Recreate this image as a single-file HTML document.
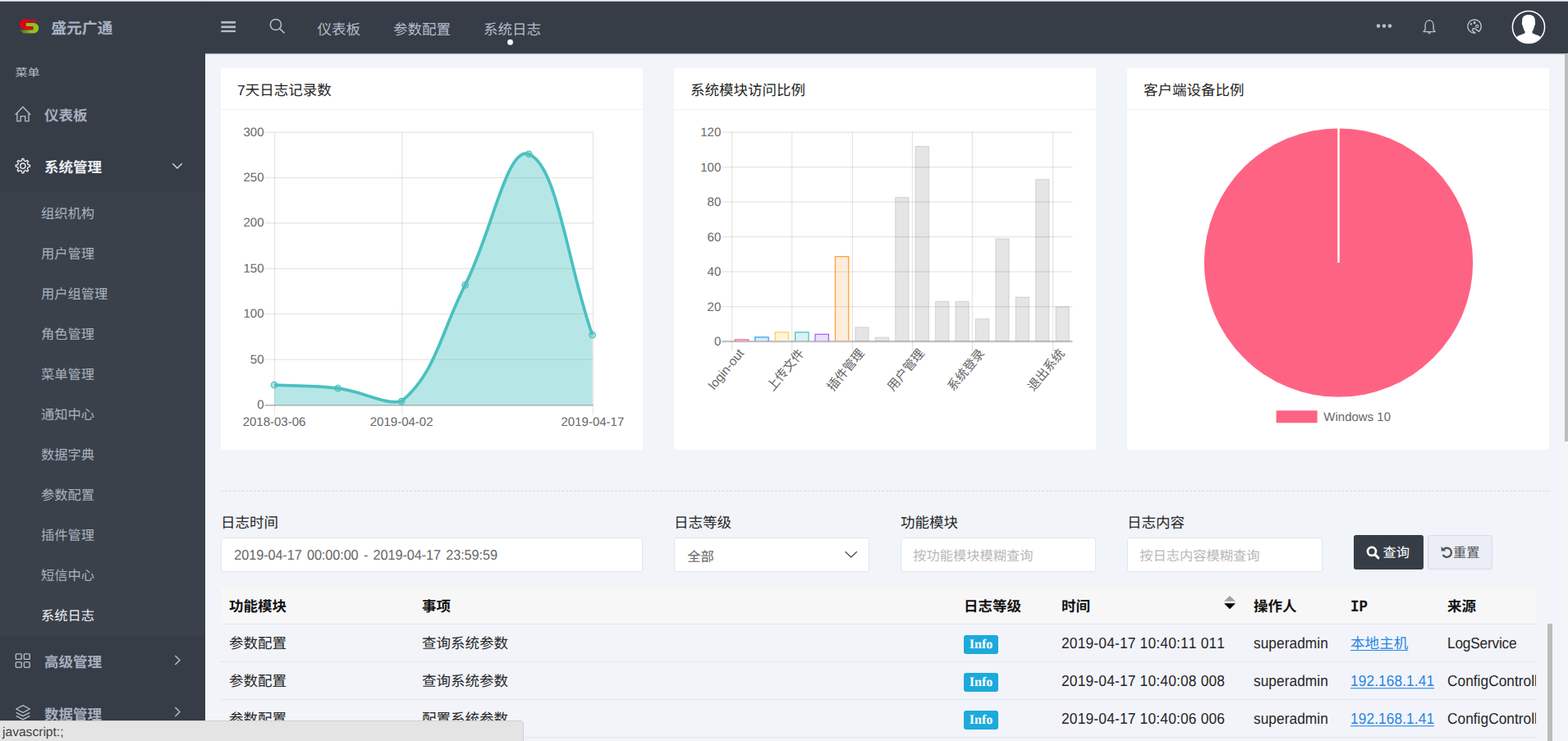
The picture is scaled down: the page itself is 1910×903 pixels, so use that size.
<!DOCTYPE html>
<html lang="zh-CN"><head><meta charset="utf-8"><title>系统日志</title>
<style>
*{box-sizing:border-box;margin:0;padding:0}
html,body{width:1910px;height:903px;overflow:hidden}
body{position:relative;text-rendering:geometricPrecision;background:#f1f4f9;font-family:"Liberation Sans","Noto Sans CJK SC",sans-serif;color:#222;font-size:17.5px;line-height:1}
.abs{position:absolute}
svg{position:absolute;overflow:visible}
#topline{left:0;top:0;width:1910px;height:2px;background:linear-gradient(#ececec 0,#ececec 55%,#7b7f86 100%);z-index:50}
#side{left:0;top:0;width:250px;height:903px;background:#363d47}
#head{left:250px;top:0;width:1660px;height:65px;background:#363d47;box-shadow:0 1px 1px rgba(40,46,56,.35)}
#sub{left:0;top:235px;width:250px;height:539px;background:#3a414b}
.t{position:absolute;white-space:nowrap;line-height:20px;height:20px;margin-top:-10px}
.logo{left:62.3px;top:34.7px;font-size:18.75px;font-weight:bold;color:#a8b2c3}
.menu{left:18.5px;top:88.6px;font-size:15px;color:#b5bbc6;transform:scaleY(.88);transform-origin:0 50%}
.m1{left:54px;font-size:17.5px;font-weight:bold;color:#a6afbd}
.m1.on{color:#eceef2}
.m2{left:50px;margin-top:-9.3px;font-size:16.25px;color:#aab2bf}
.m2.on{color:#eef0f3}
.tab{top:35.5px;font-size:17.5px;color:#b3bccb}
.card{position:absolute;top:83px;width:514px;height:465px;background:#fff;border-radius:3px}
.card .hd{position:absolute;left:0;top:0;width:514px;height:50.6px;border-bottom:1.25px solid #edf0f6}
.card .tt{left:20px;top:27px;font-size:17.5px;color:#262626}
.lab{font-size:17.5px;color:#262626;top:636.6px}
.inp{position:absolute;top:655px;height:42px;background:#fff;border:1px solid #e1e4f2;border-radius:3px}
.inp .t{left:15px;top:20px;font-size:16.25px;color:#666;font-kerning:none}
.inp .ph{color:#b9b9b9}
.btn{position:absolute;top:652px;height:42px;border-radius:3px}
#tbl{left:269px;top:716px;width:1602px;height:187px;overflow:hidden}
#th{left:0;top:0;width:1602px;height:44.5px;background:#f7f7f8;border-bottom:1.25px solid #e1e6f2}
.tr{position:absolute;left:0;width:1602px;height:46px;border-bottom:1.25px solid #e1e6f2;background:#f2f4fa}
.th{font-weight:bold;font-size:17.5px;color:#111;top:23px}
.td{font-size:17.3px;color:#262626;top:22.4px;font-kerning:none;transform:scaleY(1.085);transform-origin:0 20%}
.td.c{font-size:17.5px;top:23px;transform:none}
.badge{position:absolute;left:905px;top:13.2px;width:42px;height:23.3px;border-radius:3px;background:#1caadb;color:#fff;font-family:"Liberation Serif",serif;font-weight:bold;font-size:16px;line-height:23.6px;text-align:center}
a.ip{color:#2b85e4;text-decoration:underline;text-decoration-thickness:1.25px;text-underline-offset:2px}
#status{left:0;top:877.5px;width:637.5px;height:26px;background:#e4e4e4;border-top:1px solid #d0d0d0;border-right:1px solid #d0d0d0;border-top-right-radius:5px;z-index:40}
#status .t{left:3px;top:14px;font-size:15.6px;color:#3f3f3f}
</style></head><body>
<div id="side" class="abs"></div>
<div id="sub" class="abs"></div>
<div id="head" class="abs"></div>
<div id="topline" class="abs"></div>
<svg style="left:16px;top:16px" width="40" height="32" viewBox="16 16 40 32">
<defs>
<linearGradient id="lgR" x1="33" x2="46.6" y1="0" y2="0" gradientUnits="userSpaceOnUse"><stop offset="0" stop-color="#e60012"/><stop offset=".3" stop-color="#b4141f"/><stop offset="1" stop-color="#7c2231"/></linearGradient>
<linearGradient id="lgG" x1="24.2" x2="37.1" y1="0" y2="0" gradientUnits="userSpaceOnUse"><stop offset="0" stop-color="#4c6638"/><stop offset=".55" stop-color="#6a952d"/><stop offset="1" stop-color="#8fc31f"/></linearGradient>
</defs>
<path d="M31.6,28 H41 a6.25,6.25 0 0 1 0,12.5 H37 V36.5 H39.5 a1,2.1 0 0 0 0,-4.2 H31.6 Z" fill="#8fc31f"/>
<path d="M37.1,36.5 H24.2 L28.4,40.5 H37.1 Z" fill="url(#lgG)"/>
<path d="M33,23.6 H29.8 a6,6.2 0 0 0 0,12.4 H39.5 a1,1.85 0 0 0 0,-3.7 H31.5 a1,2.15 0 0 1 0,-4.3 H33 Z" fill="#e60012"/>
<path d="M32.9,23.6 H42.5 L46.6,27.2 L46.3,27.9 H32.9 Z" fill="url(#lgR)"/>
</svg>
<div class="t logo">盛元广通</div>
<div class="t menu">菜单</div>
<svg style="left:0;top:0" width="250" height="903" viewBox="0 0 250 903" fill="none" stroke="#b6bfcc" stroke-width="1.35" stroke-linejoin="miter">
<path d="M18.7,139.7 L27.9,130.3 L37.1,139.7 M20.9,137.6 V147.6 H25.2 V141.6 H30.7 V147.6 H35 V137.6"/>
<g stroke="#eceef2"><path d="M26.43,195.81 L26.90,193.50 L28.80,193.50 L29.27,195.81 L31.33,196.66 L33.29,195.36 L34.64,196.71 L33.34,198.67 L34.19,200.73 L36.50,201.20 L36.50,203.10 L34.19,203.57 L33.34,205.63 L34.64,207.59 L33.29,208.94 L31.33,207.64 L29.27,208.49 L28.80,210.80 L26.90,210.80 L26.43,208.49 L24.37,207.64 L22.41,208.94 L21.06,207.59 L22.36,205.63 L21.51,203.57 L19.20,203.10 L19.20,201.20 L21.51,200.73 L22.36,198.67 L21.06,196.71 L22.41,195.36 L24.37,196.66Z" stroke-linejoin="round"/><circle cx="27.85" cy="202.15" r="3.15"/></g>
<path d="M210.3,199.3 L216,205 L221.7,199.3" stroke="#d6dae2" stroke-width="1.4"/>
<rect x="19.3" y="796.9" width="6.9" height="6.5" rx="1"/>
<rect x="29.3" y="796.9" width="6.9" height="6.5" rx="1"/>
<rect x="19.3" y="806.8" width="6.9" height="6.5" rx="1"/>
<rect x="29.3" y="806.8" width="6.9" height="6.5" rx="1"/>
<path d="M213.4,799 L218.9,804.5 L213.4,810" stroke-width="1.4"/>
<path d="M213.4,862 L218.9,867.5 L213.4,873" stroke-width="1.4"/>
<path d="M28,859.6 L36.3,864 L28,868.4 L19.7,864 Z M19.7,868.3 L28,872.7 L36.3,868.3 M19.7,872.4 L28,876.8 L36.3,872.4" stroke-linejoin="round"/>
</svg>
<div class="t m1" style="top:141px">仪表板</div>
<div class="t m1 on" style="top:204px">系统管理</div>
<div class="t m2" style="top:260px">组织机构</div>
<div class="t m2" style="top:309px">用户管理</div>
<div class="t m2" style="top:358px">用户组管理</div>
<div class="t m2" style="top:407px">角色管理</div>
<div class="t m2" style="top:456px">菜单管理</div>
<div class="t m2" style="top:505px">通知中心</div>
<div class="t m2" style="top:554px">数据字典</div>
<div class="t m2" style="top:603px">参数配置</div>
<div class="t m2" style="top:652px">插件管理</div>
<div class="t m2" style="top:701px">短信中心</div>
<div class="t m2 on" style="top:750px">系统日志</div>
<div class="t m1" style="top:807px">高级管理</div>
<div class="t m1" style="top:870.5px">数据管理</div>
<svg style="left:250px;top:0" width="1660" height="65" viewBox="250 0 1660 65" fill="none" stroke="#b6bfcc" stroke-width="1.4">
<g stroke="none" fill="#b6bfcc"><rect x="269.4" y="25.9" width="17.6" height="2.7"/><rect x="269.4" y="31.5" width="17.6" height="2.7"/><rect x="269.4" y="36.9" width="17.6" height="2.3"/></g>
<circle cx="335.9" cy="30" r="6.6" stroke-width="1.5"/><path d="M340.7,34.8 L346.6,40.5" stroke-width="1.6"/>
<g stroke="none" fill="#b6bfcc"><circle cx="1679" cy="31.6" r="2.3"/><circle cx="1686" cy="31.6" r="2.3"/><circle cx="1693" cy="31.6" r="2.3"/></g>
<path d="M1734,38.6 H1748.2 L1746.1,36 V31 C1746.1,22.8 1736.1,22.8 1736.1,31 V36 Z" stroke-linejoin="round"/><path d="M1739.4,39.2 L1741.1,40.9 L1742.8,39.2" stroke-width="1.2"/><path d="M1741.1,24 V25" stroke-width="1.6"/>
<path d="M1797.0,40.25 A8.15,8.15 0 1 1 1801.3,38.4 L1796.7,34.9 C1795.2,33.7 1792.5,35.8 1793.8,37.3 L1797.0,40.25" stroke-width="1.45" stroke-linecap="round" stroke-linejoin="round"/>
<circle cx="1799.2" cy="31.9" r="1.6" stroke-width="1.2"/><g stroke="none" fill="#b6bfcc"><circle cx="1791.9" cy="29.3" r="1.2"/><circle cx="1796.1" cy="27.7" r="1.6"/></g>
<clipPath id="avc"><circle cx="1862" cy="33" r="19.2"/></clipPath>
<circle cx="1862" cy="33" r="19.6" stroke="#fff" stroke-width="1.5" fill="#363d47"/>
<g clip-path="url(#avc)" stroke="none" fill="#fff"><path d="M1862,17.9 C1856.5,17.9 1853.6,21 1854.2,26 C1853.6,27.5 1853.9,30.5 1854.9,31.5 C1855.4,34.5 1856.6,37 1857.6,38.5 L1857.4,40.4 C1855,41.6 1851.5,42.6 1848.5,44 L1843,56 H1881 L1875.5,44 C1872.5,42.6 1869,41.6 1866.6,40.4 L1866.4,38.5 C1867.4,37 1868.6,34.5 1869.1,31.5 C1870.1,30.5 1870.4,27.5 1869.8,26 C1870.4,21 1867.5,17.9 1862,17.9 Z"/></g>
<circle cx="621.5" cy="51.4" r="3.4" stroke="none" fill="#fff"/>
</svg>
<div class="t tab" style="left:386.5px">仪表板</div>
<div class="t tab" style="left:479px">参数配置</div>
<div class="t tab" style="left:589px">系统日志</div>
<div class="card" style="left:269px"><div class="hd"></div><div class="t tt">7天日志记录数</div></div>
<div class="card" style="left:821px"><div class="hd"></div><div class="t tt">系统模块访问比例</div></div>
<div class="card" style="left:1373px"><div class="hd"></div><div class="t tt">客户端设备比例</div></div>
<svg style="left:269px;top:134px" width="514" height="413" viewBox="269 134 514 413" font-family="Liberation Sans, sans-serif" font-size="15" fill="#666">
<line x1="322.60" x2="722.50" y1="493.90" y2="493.90" stroke="rgba(0,0,0,0.27)" stroke-width="1.9"/>
<text x="321.5" y="497.90" text-anchor="end">0</text>
<line x1="322.60" x2="722.50" y1="438.12" y2="438.12" stroke="rgba(0,0,0,0.1)" stroke-width="1.25"/>
<text x="321.5" y="442.52" text-anchor="end">50</text>
<line x1="322.60" x2="722.50" y1="382.73" y2="382.73" stroke="rgba(0,0,0,0.1)" stroke-width="1.25"/>
<text x="321.5" y="387.13" text-anchor="end">100</text>
<line x1="322.60" x2="722.50" y1="327.35" y2="327.35" stroke="rgba(0,0,0,0.1)" stroke-width="1.25"/>
<text x="321.5" y="331.75" text-anchor="end">150</text>
<line x1="322.60" x2="722.50" y1="271.97" y2="271.97" stroke="rgba(0,0,0,0.1)" stroke-width="1.25"/>
<text x="321.5" y="276.37" text-anchor="end">200</text>
<line x1="322.60" x2="722.50" y1="216.58" y2="216.58" stroke="rgba(0,0,0,0.1)" stroke-width="1.25"/>
<text x="321.5" y="220.98" text-anchor="end">250</text>
<line x1="322.60" x2="722.50" y1="161.20" y2="161.20" stroke="rgba(0,0,0,0.1)" stroke-width="1.25"/>
<text x="321.5" y="165.60" text-anchor="end">300</text>
<line x1="334.60" x2="334.60" y1="161.20" y2="505.50" stroke="rgba(0,0,0,0.1)" stroke-width="1.25"/>
<text x="334.00" y="519.0" text-anchor="middle">2018-03-06</text>
<line x1="489.76" x2="489.76" y1="161.20" y2="505.50" stroke="rgba(0,0,0,0.1)" stroke-width="1.25"/>
<text x="489.16" y="519.0" text-anchor="middle">2019-04-02</text>
<line x1="722.50" x2="722.50" y1="161.20" y2="505.50" stroke="rgba(0,0,0,0.1)" stroke-width="1.25"/>
<text x="721.90" y="519.0" text-anchor="middle">2019-04-17</text>
<path d="M334.10,469.13 C365.10,470.77 380.90,469.28 411.60,473.23 C442.90,477.26 468.72,493.50 489.10,489.07 C530.72,455.25 537.04,404.74 566.60,347.29 C599.04,284.23 617.35,177.27 644.10,187.78 C679.35,201.64 690.60,320.04 721.60,408.21 L721.60,493.50 L334.10,493.50 Z" fill="rgba(75,192,192,0.4)" stroke="none"/>
<path d="M334.10,469.13 C365.10,470.77 380.90,469.28 411.60,473.23 C442.90,477.26 468.72,493.50 489.10,489.07 C530.72,455.25 537.04,404.74 566.60,347.29 C599.04,284.23 617.35,177.27 644.10,187.78 C679.35,201.64 690.60,320.04 721.60,408.21" fill="none" stroke="rgb(75,192,192)" stroke-width="3.75" stroke-linecap="butt" stroke-linejoin="miter"/>
<circle cx="334.10" cy="469.13" r="3.75" fill="rgba(75,192,192,0.4)" stroke="rgb(75,192,192)" stroke-width="1.25"/>
<circle cx="411.60" cy="473.23" r="3.75" fill="rgba(75,192,192,0.4)" stroke="rgb(75,192,192)" stroke-width="1.25"/>
<circle cx="489.10" cy="489.07" r="3.75" fill="rgba(75,192,192,0.4)" stroke="rgb(75,192,192)" stroke-width="1.25"/>
<circle cx="566.60" cy="347.29" r="3.75" fill="rgba(75,192,192,0.4)" stroke="rgb(75,192,192)" stroke-width="1.25"/>
<circle cx="644.10" cy="187.78" r="3.75" fill="rgba(75,192,192,0.4)" stroke="rgb(75,192,192)" stroke-width="1.25"/>
<circle cx="721.60" cy="408.21" r="3.75" fill="rgba(75,192,192,0.4)" stroke="rgb(75,192,192)" stroke-width="1.25"/>
</svg>
<svg style="left:821px;top:134px" width="514" height="413" viewBox="821 134 514 413" font-family="Liberation Sans, Noto Sans CJK SC, sans-serif" font-size="15" fill="#666">
<line x1="879.30" x2="1306.40" y1="416.10" y2="416.10" stroke="rgba(0,0,0,0.24)" stroke-width="2.2"/>
<text x="878.3" y="421.10" text-anchor="end">0</text>
<line x1="879.30" x2="1306.40" y1="373.70" y2="373.70" stroke="rgba(0,0,0,0.1)" stroke-width="1.25"/>
<text x="878.3" y="378.60" text-anchor="end">20</text>
<line x1="879.30" x2="1306.40" y1="331.20" y2="331.20" stroke="rgba(0,0,0,0.1)" stroke-width="1.25"/>
<text x="878.3" y="336.10" text-anchor="end">40</text>
<line x1="879.30" x2="1306.40" y1="288.70" y2="288.70" stroke="rgba(0,0,0,0.1)" stroke-width="1.25"/>
<text x="878.3" y="293.60" text-anchor="end">60</text>
<line x1="879.30" x2="1306.40" y1="246.20" y2="246.20" stroke="rgba(0,0,0,0.1)" stroke-width="1.25"/>
<text x="878.3" y="251.10" text-anchor="end">80</text>
<line x1="879.30" x2="1306.40" y1="203.70" y2="203.70" stroke="rgba(0,0,0,0.1)" stroke-width="1.25"/>
<text x="878.3" y="208.60" text-anchor="end">100</text>
<line x1="879.30" x2="1306.40" y1="161.20" y2="161.20" stroke="rgba(0,0,0,0.1)" stroke-width="1.25"/>
<text x="878.3" y="166.10" text-anchor="end">120</text>
<line x1="891.50" x2="891.50" y1="160.70" y2="427.70" stroke="rgba(0,0,0,0.1)" stroke-width="1.25"/>
<line x1="964.70" x2="964.70" y1="160.70" y2="427.70" stroke="rgba(0,0,0,0.1)" stroke-width="1.25"/>
<line x1="1038.40" x2="1038.40" y1="160.70" y2="427.70" stroke="rgba(0,0,0,0.1)" stroke-width="1.25"/>
<line x1="1111.50" x2="1111.50" y1="160.70" y2="427.70" stroke="rgba(0,0,0,0.1)" stroke-width="1.25"/>
<line x1="1184.40" x2="1184.40" y1="160.70" y2="427.70" stroke="rgba(0,0,0,0.1)" stroke-width="1.25"/>
<line x1="1282.60" x2="1282.60" y1="160.70" y2="427.70" stroke="rgba(0,0,0,0.1)" stroke-width="1.25"/>
<path d="M895.32,415.70 V413.79 H911.70 V415.70" fill="rgba(255,99,132,0.2)" stroke="rgb(255,99,132)" stroke-width="1.25"/>
<path d="M919.74,415.70 V410.90 H936.12 V415.70" fill="rgba(54,162,235,0.2)" stroke="rgb(54,162,235)" stroke-width="1.25"/>
<path d="M944.15,415.70 V404.80 H960.53 V415.70" fill="rgba(255,206,86,0.2)" stroke="rgb(255,206,86)" stroke-width="1.25"/>
<path d="M968.57,415.70 V404.80 H984.95 V415.70" fill="rgba(75,192,192,0.2)" stroke="rgb(75,192,192)" stroke-width="1.25"/>
<path d="M992.99,415.70 V407.33 H1009.37 V415.70" fill="rgba(153,102,255,0.2)" stroke="rgb(153,102,255)" stroke-width="1.25"/>
<path d="M1017.41,415.70 V312.60 H1033.79 V415.70" fill="rgba(255,159,64,0.2)" stroke="rgb(255,159,64)" stroke-width="1.25"/>
<path d="M1041.82,415.70 V398.79 H1058.21 V415.70" fill="rgba(0,0,0,0.1)" stroke="rgba(0,0,0,0.1)" stroke-width="1.25"/>
<path d="M1066.24,415.70 V411.24 H1082.62 V415.70" fill="rgba(0,0,0,0.1)" stroke="rgba(0,0,0,0.1)" stroke-width="1.25"/>
<path d="M1090.66,415.70 V240.56 H1107.04 V415.70" fill="rgba(0,0,0,0.1)" stroke="rgba(0,0,0,0.1)" stroke-width="1.25"/>
<path d="M1115.08,415.70 V178.30 H1131.46 V415.70" fill="rgba(0,0,0,0.1)" stroke="rgba(0,0,0,0.1)" stroke-width="1.25"/>
<path d="M1139.49,415.70 V367.43 H1155.88 V415.70" fill="rgba(0,0,0,0.1)" stroke="rgba(0,0,0,0.1)" stroke-width="1.25"/>
<path d="M1163.91,415.70 V367.43 H1180.29 V415.70" fill="rgba(0,0,0,0.1)" stroke="rgba(0,0,0,0.1)" stroke-width="1.25"/>
<path d="M1188.33,415.70 V388.68 H1204.71 V415.70" fill="rgba(0,0,0,0.1)" stroke="rgba(0,0,0,0.1)" stroke-width="1.25"/>
<path d="M1212.75,415.70 V290.93 H1229.13 V415.70" fill="rgba(0,0,0,0.1)" stroke="rgba(0,0,0,0.1)" stroke-width="1.25"/>
<path d="M1237.17,415.70 V362.11 H1253.55 V415.70" fill="rgba(0,0,0,0.1)" stroke="rgba(0,0,0,0.1)" stroke-width="1.25"/>
<path d="M1261.58,415.70 V218.67 H1277.96 V415.70" fill="rgba(0,0,0,0.1)" stroke="rgba(0,0,0,0.1)" stroke-width="1.25"/>
<path d="M1286.00,415.70 V373.80 H1302.38 V415.70" fill="rgba(0,0,0,0.1)" stroke="rgba(0,0,0,0.1)" stroke-width="1.25"/>
<text transform="translate(903.11,427.50) rotate(-50.5)" text-anchor="end" x="0" y="5" font-size="15.2">login-out</text>
<text transform="translate(976.36,427.50) rotate(-50.5)" text-anchor="end" x="0" y="5" font-size="15.2" fill="#666">上传文件</text>
<text transform="translate(1049.61,427.50) rotate(-50.5)" text-anchor="end" x="0" y="5" font-size="15.2" fill="#666">插件管理</text>
<text transform="translate(1122.87,427.50) rotate(-50.5)" text-anchor="end" x="0" y="5" font-size="15.2" fill="#666">用户管理</text>
<text transform="translate(1196.12,427.50) rotate(-50.5)" text-anchor="end" x="0" y="5" font-size="15.2" fill="#666">系统登录</text>
<text transform="translate(1293.79,427.50) rotate(-50.5)" text-anchor="end" x="0" y="5" font-size="15.2" fill="#666">退出系统</text>
</svg>
<svg style="left:1373px;top:134px" width="514" height="413" viewBox="1373 134 514 413" font-family="Liberation Sans, sans-serif" font-size="15" fill="#666">
<circle cx="1630.5" cy="320.1" r="163.7" fill="#ff6384"/>
<line x1="1630.5" x2="1630.5" y1="155.40000000000003" y2="320.1" stroke="#fff" stroke-width="2.5"/>
<rect x="1554.6" y="500.3" width="50" height="15" fill="#ff6384"/>
<text x="1612.3" y="513">Windows 10</text>
</svg>
<svg style="left:269px;top:597px" width="1618" height="3" viewBox="0 0 1618 3"><line x1="0.3" x2="1618" y1="1.4" y2="1.4" stroke="#dadde3" stroke-width="1.25" stroke-dasharray="2.7 2.3"/></svg>
<div class="t lab" style="left:269px">日志时间</div>
<div class="t lab" style="left:821px">日志等级</div>
<div class="t lab" style="left:1097px">功能模块</div>
<div class="t lab" style="left:1373px">日志内容</div>
<div class="inp" style="left:269.3px;width:513.5px"><div class="t" style="letter-spacing:-.08px;word-spacing:1.9px;top:21.2px;transform:scaleY(1.05);transform-origin:0 80%">2019-04-17 00:00:00 - 2019-04-17 23:59:59</div></div>
<div class="inp" style="left:821.3px;width:237.5px"><div class="t" style="top:22.8px">全部</div><svg style="left:205px;top:12px" width="20" height="16" viewBox="0 0 20 16" fill="none" stroke="#555" stroke-width="1.45"><path d="M2.6,4.3 L9.7,11.1 L16.8,4.3"/></svg></div>
<div class="inp" style="left:1097.3px;width:237.5px"><div class="t ph" style="top:21.6px;left:14px">按功能模块模糊查询</div></div>
<div class="inp" style="left:1373.3px;width:237.5px"><div class="t ph" style="top:21.6px;left:14px">按日志内容模糊查询</div></div>
<div class="btn" style="left:1649px;width:85px;background:#363d47"><svg style="left:15px;top:13.2px" width="17" height="17" viewBox="0 0 17 17" fill="none" stroke="#fff"><circle cx="7" cy="6.9" r="5" stroke-width="2.7"/><path d="M10.8,10.8 L14.9,14.9" stroke-width="3" stroke-linecap="round"/></svg><div class="t" style="left:35.5px;top:22.2px;font-size:16.25px;color:#fff">查询</div></div>
<div class="btn" style="left:1739px;width:79px;background:#ebedf7;border:1.25px solid #d7daef"><svg style="left:14.5px;top:12.2px" width="16" height="16" viewBox="0 0 16 16" fill="none" stroke="#555"><path d="M3.2,4.6 A5.6,5.6 0 1 1 2.6,11.2" stroke-width="2.35"/><path d="M0.6,0.9 V6.6 H6.3 Z" fill="#555" stroke="none"/></svg><div class="t" style="left:30px;top:21.2px;font-size:16.25px;color:#555">重置</div></div>
<div id="tbl" class="abs">
<div id="th" class="abs">
<div class="t th" style="left:10px">功能模块</div>
<div class="t th" style="left:245px">事项</div>
<div class="t th" style="left:905px">日志等级</div>
<div class="t th" style="left:1024px">时间</div>
<div class="t th" style="left:1258px">操作人</div>
<div class="t th" style="left:1376px;font-family:'Liberation Mono',monospace;font-size:17.6px;top:23.6px;transform:scaleY(1.14);transform-origin:0 50%">IP</div>
<div class="t th" style="left:1494px">来源</div>
<svg style="left:1221px;top:9px" width="16" height="18" viewBox="0 0 16 18"><path d="M1,7.8 L8,0.9 L15,7.8 Z" fill="#a3a3a3"/><path d="M1,10.2 L8,17.3 L15,10.2 Z" fill="#000"/></svg>
</div>
<div class="tr" style="top:44.5px">
<div class="t td c" style="left:10px">参数配置</div>
<div class="t td c" style="left:245px">查询系统参数</div>
<div class="badge">Info</div>
<div class="t td" style="left:1024px;letter-spacing:.22px">2019-04-17 10:40:11 011</div>
<div class="t td" style="left:1258px;letter-spacing:.05px">superadmin</div>
<div class="t td c" style="left:1376px;letter-spacing:.1px"><a class="ip">本地主机</a></div>
<div class="t td" style="left:1494px;letter-spacing:-.2px">LogService</div>
</div>
<div class="tr" style="top:90.5px">
<div class="t td c" style="left:10px">参数配置</div>
<div class="t td c" style="left:245px">查询系统参数</div>
<div class="badge">Info</div>
<div class="t td" style="left:1024px;letter-spacing:.22px">2019-04-17 10:40:08 008</div>
<div class="t td" style="left:1258px;letter-spacing:.05px">superadmin</div>
<div class="t td" style="left:1376px;letter-spacing:.1px"><a class="ip">192.168.1.41</a></div>
<div class="t td" style="left:1494px;letter-spacing:.03px">ConfigControll</div>
</div>
<div class="tr" style="top:136.5px">
<div class="t td c" style="left:10px">参数配置</div>
<div class="t td c" style="left:245px">配置系统参数</div>
<div class="badge">Info</div>
<div class="t td" style="left:1024px;letter-spacing:.22px">2019-04-17 10:40:06 006</div>
<div class="t td" style="left:1258px;letter-spacing:.05px">superadmin</div>
<div class="t td" style="left:1376px;letter-spacing:.1px"><a class="ip">192.168.1.41</a></div>
<div class="t td" style="left:1494px;letter-spacing:.03px">ConfigControll</div>
</div>
<div class="tr" style="top:182.5px">
<div class="t td c" style="left:10px">参数配置</div>
<div class="t td c" style="left:245px">查询系统参数</div>
<div class="badge">Info</div>
<div class="t td" style="left:1024px;letter-spacing:.22px">2019-04-17 10:40:03 003</div>
<div class="t td" style="left:1258px;letter-spacing:.05px">superadmin</div>
<div class="t td" style="left:1376px;letter-spacing:.1px"><a class="ip">192.168.1.41</a></div>
<div class="t td" style="left:1494px;letter-spacing:.03px">ConfigControll</div>
</div>
</div>
<div class="abs" style="left:1885px;top:760px;width:6px;height:143px;background:#bcbcbc"></div>
<div class="abs" style="left:1906px;top:65px;width:4px;height:838px;background:#f5f5f5"></div>
<div class="abs" style="left:1906px;top:65px;width:4px;height:473px;background:#bdbdbd"></div>
<div id="status" class="abs"><div class="t">javascript:;</div></div>
</body></html>
